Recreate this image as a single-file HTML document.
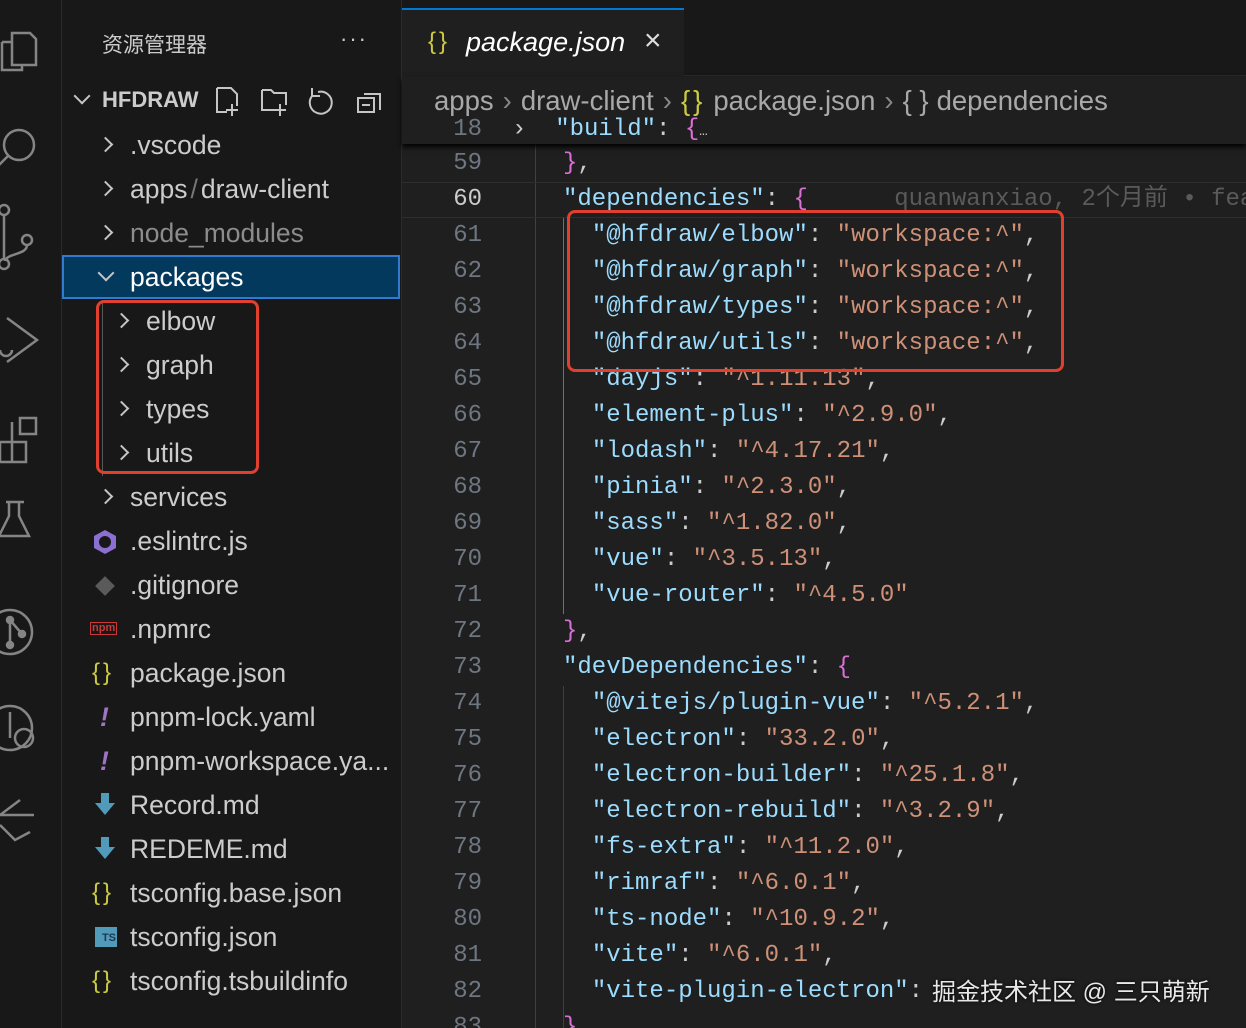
<!DOCTYPE html>
<html><head><meta charset="utf-8"><style>
*{margin:0;padding:0;box-sizing:border-box}
html,body{width:1246px;height:1028px;overflow:hidden}
body{background:#1f1f1f;position:relative;font-family:"Liberation Sans","Noto Sans CJK SC",sans-serif;color:#cccccc}
.abs{position:absolute}
#act{left:0;top:0;width:62px;height:1028px;background:#181818;border-right:1px solid #2b2b2b}
#side{left:62px;top:0;width:340px;height:1028px;background:#181818;border-right:1px solid #2b2b2b}
.row{position:absolute;left:0;width:338px;height:44px;line-height:44px;font-size:26.5px;color:#cccccc;white-space:nowrap}
.cr{position:absolute;top:16px;width:11px;height:11px;border-right:2px solid #c5c5c5;border-bottom:2px solid #c5c5c5;transform:rotate(-45deg)}
.cd{position:absolute;top:12px;width:12px;height:12px;border-right:2px solid #c5c5c5;border-bottom:2px solid #c5c5c5;transform:rotate(45deg)}
.code{position:absolute;left:402px;right:0;font-family:"Liberation Mono",monospace;font-size:24px;height:36px;line-height:36px;white-space:pre}
.ln{position:absolute;left:0;width:80px;text-align:right;color:#6e7681}
.tx{position:absolute;left:161px}
.k{color:#9cdcfe}.s{color:#ce9178}.p{color:#da70d6}
.bc{font-size:27.5px;color:#a9a9a9;white-space:nowrap}
.sep{color:#888;display:inline-block;margin:0 9px}
</style></head><body>
<div class="abs" style="left:0;top:0;width:1246px;height:8px;background:#181818"></div>
<div id="act" class="abs">
<svg width="62" height="1028" fill="none" stroke="#858585" stroke-width="2.5">
<path d="M12 33h18l6 6v26h-24z M2 42h10 M2 42v28h20v-5"/>
<circle cx="19" cy="145" r="15"/><path d="M8 156l-10 10"/>
<circle cx="4" cy="210" r="5"/><circle cx="4" cy="264" r="5"/><circle cx="27" cy="240" r="5"/><path d="M4 215v44 M27 245c0 10-20 8-22 16"/>
<path d="M7 318l30 22-30 22 M0 350a6 6 0 1 0 12 0"/>
<path d="M0 442h26v20H0z M12 422v40 M20 418h16v16H20z"/>
<path d="M6 502h18 M9 502v14l-10 20h30l-10-20v-14"/>
<circle cx="10" cy="632" r="22"/><circle cx="10" cy="620" r="3" fill="#858585"/><circle cx="10" cy="645" r="3" fill="#858585"/><circle cx="22" cy="634" r="3" fill="#858585"/><path d="M10 620v25 M10 620l12 14"/>
<circle cx="10" cy="728" r="22"/><circle cx="24" cy="738" r="9"/><path d="M10 712v26"/>
<path d="M20 800l-20 15h34 M0 825l15 15 15-8"/>
</svg></div>
<div id="side" class="abs">
<div class="abs" style="left:40px;top:29px;font-size:21px;color:#cccccc">资源管理器</div>
<div class="abs" style="left:278px;top:26px;font-size:22px;letter-spacing:2px">···</div>
<div class="row" style="top:78px"><span class="cd" style="left:14px"></span><span style="position:absolute;left:40px;font-weight:bold;font-size:22px">HFDRAW</span>
<svg class="abs" style="left:150px;top:6px" width="190" height="34" fill="none" stroke="#c5c5c5" stroke-width="2"><path d="M5 4h14l6 6v12 M5 4v24h10 M14 26h12 M20 20v12"/><path d="M50 6h9l3 3h12v12 M50 6v20h12 M62 26h12 M68 20v12"/><path d="M106 8a11 11 0 1 1-6 4 M100 4v8h8"/><path d="M152 10h16v16 M146 14h16v14h-16z M150 21h8"/></svg></div>
<div class="row" style="top:123px"><span class="cr" style="left:38px"></span><span style="position:absolute;left:68px">.vscode</span></div>
<div class="row" style="top:167px"><span class="cr" style="left:38px"></span><span style="position:absolute;left:68px">apps<span style="color:#777;margin:0 3px">/</span>draw-client</span></div>
<div class="row" style="top:211px;color:#8c8c8c"><span class="cr" style="left:38px"></span><span style="position:absolute;left:68px">node_modules</span></div>
<div class="row" style="top:255px;background:#04395e;border:2px solid #2f7bd1;color:#fff;width:338px"><span class="cd" style="left:36px;top:10px"></span><span style="position:absolute;left:66px;top:-2px">packages</span></div>
<div class="abs" style="left:40px;top:300px;width:1px;height:176px;background:#585858"></div>
<div class="row" style="top:299px"><span class="cr" style="left:54px"></span><span style="position:absolute;left:84px">elbow</span></div>
<div class="row" style="top:343px"><span class="cr" style="left:54px"></span><span style="position:absolute;left:84px">graph</span></div>
<div class="row" style="top:387px"><span class="cr" style="left:54px"></span><span style="position:absolute;left:84px">types</span></div>
<div class="row" style="top:431px"><span class="cr" style="left:54px"></span><span style="position:absolute;left:84px">utils</span></div>
<div class="abs" style="left:34px;top:300px;width:163px;height:174px;border:3px solid #e0402d;border-radius:8px"></div>
<div class="row" style="top:475px"><span class="cr" style="left:38px"></span><span style="position:absolute;left:68px">services</span></div>
<div class="row" style="top:519px"><svg class="abs" style="left:30px;top:10px" width="26" height="26"><polygon points="13,1 24,7 24,19 13,25 2,19 2,7" fill="#8b6fd1"/><circle cx="13" cy="13" r="6" fill="#181818"/></svg><span style="position:absolute;left:68px">.eslintrc.js</span></div>
<div class="row" style="top:563px"><svg class="abs" style="left:32px;top:12px" width="22" height="22"><rect x="4" y="4" width="14" height="14" transform="rotate(45 11 11)" fill="#5a5a5a"/></svg><span style="position:absolute;left:68px">.gitignore</span></div>
<div class="row" style="top:607px"><span style="position:absolute;left:28px;font-size:11px;color:#cb3837;font-weight:bold;border:1px solid #cb3837;line-height:11px;height:13px;top:15px;padding:0 1px">npm</span><span style="position:absolute;left:68px">.npmrc</span></div>
<div class="row" style="top:651px"><span style="position:absolute;left:30px;color:#cbcb41;font-size:24px;letter-spacing:3px">{}</span><span style="position:absolute;left:68px">package.json</span></div>
<div class="row" style="top:695px"><span style="position:absolute;left:38px;color:#a074c4;font-style:italic;font-weight:bold">!</span><span style="position:absolute;left:68px">pnpm-lock.yaml</span></div>
<div class="row" style="top:739px"><span style="position:absolute;left:38px;color:#a074c4;font-style:italic;font-weight:bold">!</span><span style="position:absolute;left:68px">pnpm-workspace.ya...</span></div>
<div class="row" style="top:783px"><svg class="abs" style="left:32px;top:10px" width="22" height="24"><path d="M7 0h8v10h6L11 22 1 10h6z" fill="#519aba"/></svg><span style="position:absolute;left:68px">Record.md</span></div>
<div class="row" style="top:827px"><svg class="abs" style="left:32px;top:10px" width="22" height="24"><path d="M7 0h8v10h6L11 22 1 10h6z" fill="#519aba"/></svg><span style="position:absolute;left:68px">REDEME.md</span></div>
<div class="row" style="top:871px"><span style="position:absolute;left:30px;color:#cbcb41;font-size:24px;letter-spacing:3px">{}</span><span style="position:absolute;left:68px">tsconfig.base.json</span></div>
<div class="row" style="top:915px"><span style="position:absolute;left:33px;top:12px;width:22px;height:20px;background:#519aba;color:#1a3a50;font-size:11px;line-height:22px;text-align:right;font-weight:bold;padding-right:1px">TS</span><span style="position:absolute;left:68px">tsconfig.json</span></div>
<div class="row" style="top:959px"><span style="position:absolute;left:30px;color:#cbcb41;font-size:24px;letter-spacing:3px">{}</span><span style="position:absolute;left:68px">tsconfig.tsbuildinfo</span></div>
</div>
<!-- tabs -->
<div class="abs" style="left:402px;top:8px;width:844px;height:68px;background:#181818;border-bottom:1px solid #2b2b2b"></div>
<div class="abs" style="left:402px;top:8px;width:282px;height:69px;background:#1f1f1f;border-top:2px solid #0078d4"></div>
<div class="abs" style="left:428px;top:28px;font-size:24px;color:#cbcb41;letter-spacing:3px">{}</div>
<div class="abs" style="left:466px;top:27px;font-size:27px;font-style:italic;color:#fff">package.json</div>
<div class="abs" style="left:644px;top:24px;font-size:30px;color:#ddd">×</div>
<!-- code -->
<div class="abs" style="left:535px;top:144px;width:1px;height:884px;background:#404040"></div>
<div class="abs" style="left:563px;top:218px;width:1px;height:396px;background:#707070"></div>
<div class="abs" style="left:563px;top:686px;width:1px;height:345px;background:#404040"></div>
<div class="abs" style="left:402px;top:182px;width:844px;height:36px;border-top:1px solid #2e2e2e;border-bottom:1px solid #2e2e2e"></div>
<div class="code" style="top:146px"><span class="ln">59</span><span class="tx"><span class="p">}</span>,</span></div>
<div class="code" style="top:182px"><span class="ln" style="color:#ccc">60</span><span class="tx"><span class="k">"dependencies"</span>: <span class="p">{</span>      <span style="color:#5a5a5a">quanwanxiao, 2个月前 • fea</span></span></div>
<div class="code" style="top:218px"><span class="ln">61</span><span class="tx">  <span class="k">"@hfdraw/elbow"</span>: <span class="s">"workspace:^"</span>,</span></div>
<div class="code" style="top:254px"><span class="ln">62</span><span class="tx">  <span class="k">"@hfdraw/graph"</span>: <span class="s">"workspace:^"</span>,</span></div>
<div class="code" style="top:290px"><span class="ln">63</span><span class="tx">  <span class="k">"@hfdraw/types"</span>: <span class="s">"workspace:^"</span>,</span></div>
<div class="code" style="top:326px"><span class="ln">64</span><span class="tx">  <span class="k">"@hfdraw/utils"</span>: <span class="s">"workspace:^"</span>,</span></div>
<div class="code" style="top:362px"><span class="ln">65</span><span class="tx">  <span class="k">"dayjs"</span>: <span class="s">"^1.11.13"</span>,</span></div>
<div class="code" style="top:398px"><span class="ln">66</span><span class="tx">  <span class="k">"element-plus"</span>: <span class="s">"^2.9.0"</span>,</span></div>
<div class="code" style="top:434px"><span class="ln">67</span><span class="tx">  <span class="k">"lodash"</span>: <span class="s">"^4.17.21"</span>,</span></div>
<div class="code" style="top:470px"><span class="ln">68</span><span class="tx">  <span class="k">"pinia"</span>: <span class="s">"^2.3.0"</span>,</span></div>
<div class="code" style="top:506px"><span class="ln">69</span><span class="tx">  <span class="k">"sass"</span>: <span class="s">"^1.82.0"</span>,</span></div>
<div class="code" style="top:542px"><span class="ln">70</span><span class="tx">  <span class="k">"vue"</span>: <span class="s">"^3.5.13"</span>,</span></div>
<div class="code" style="top:578px"><span class="ln">71</span><span class="tx">  <span class="k">"vue-router"</span>: <span class="s">"^4.5.0"</span></span></div>
<div class="code" style="top:614px"><span class="ln">72</span><span class="tx"><span class="p">}</span>,</span></div>
<div class="code" style="top:650px"><span class="ln">73</span><span class="tx"><span class="k">"devDependencies"</span>: <span class="p">{</span></span></div>
<div class="code" style="top:686px"><span class="ln">74</span><span class="tx">  <span class="k">"@vitejs/plugin-vue"</span>: <span class="s">"^5.2.1"</span>,</span></div>
<div class="code" style="top:722px"><span class="ln">75</span><span class="tx">  <span class="k">"electron"</span>: <span class="s">"33.2.0"</span>,</span></div>
<div class="code" style="top:758px"><span class="ln">76</span><span class="tx">  <span class="k">"electron-builder"</span>: <span class="s">"^25.1.8"</span>,</span></div>
<div class="code" style="top:794px"><span class="ln">77</span><span class="tx">  <span class="k">"electron-rebuild"</span>: <span class="s">"^3.2.9"</span>,</span></div>
<div class="code" style="top:830px"><span class="ln">78</span><span class="tx">  <span class="k">"fs-extra"</span>: <span class="s">"^11.2.0"</span>,</span></div>
<div class="code" style="top:866px"><span class="ln">79</span><span class="tx">  <span class="k">"rimraf"</span>: <span class="s">"^6.0.1"</span>,</span></div>
<div class="code" style="top:902px"><span class="ln">80</span><span class="tx">  <span class="k">"ts-node"</span>: <span class="s">"^10.9.2"</span>,</span></div>
<div class="code" style="top:938px"><span class="ln">81</span><span class="tx">  <span class="k">"vite"</span>: <span class="s">"^6.0.1"</span>,</span></div>
<div class="code" style="top:974px"><span class="ln">82</span><span class="tx">  <span class="k">"vite-plugin-electron"</span>: </span></div>
<div class="code" style="top:1010px;height:18px;overflow:hidden"><span class="ln">83</span><span class="tx"><span class="p">}</span></span></div>
<!-- sticky -->
<div class="abs" style="left:402px;top:77px;width:844px;height:67px;background:#1f1f1f;box-shadow:0 3px 5px #000"></div>
<div class="abs bc" style="left:434px;top:85px">apps<span class="sep">›</span>draw-client<span class="sep">›</span><span style="color:#cbcb41;letter-spacing:3px;margin-right:8px">{}</span>package.json<span class="sep">›</span><span style="margin-right:8px">{ }</span>dependencies</div>
<div class="code" style="top:114px;height:30px;overflow:hidden"><span class="ln" style="top:-2px">18</span><span class="tx" style="left:110px;top:-2px">›  <span class="k">"build"</span>: <span class="p">{</span><span style="font-size:14px">…</span></span></div>
<div class="abs" style="left:567px;top:210px;width:497px;height:162px;border:3px solid #e0402d;border-radius:8px"></div>
<div class="abs" style="left:932px;top:972px;font-size:24px;color:#e8e8e8;white-space:nowrap;text-shadow:0 0 3px #000">掘金技术社区 @ 三只萌新</div>
</body></html>
